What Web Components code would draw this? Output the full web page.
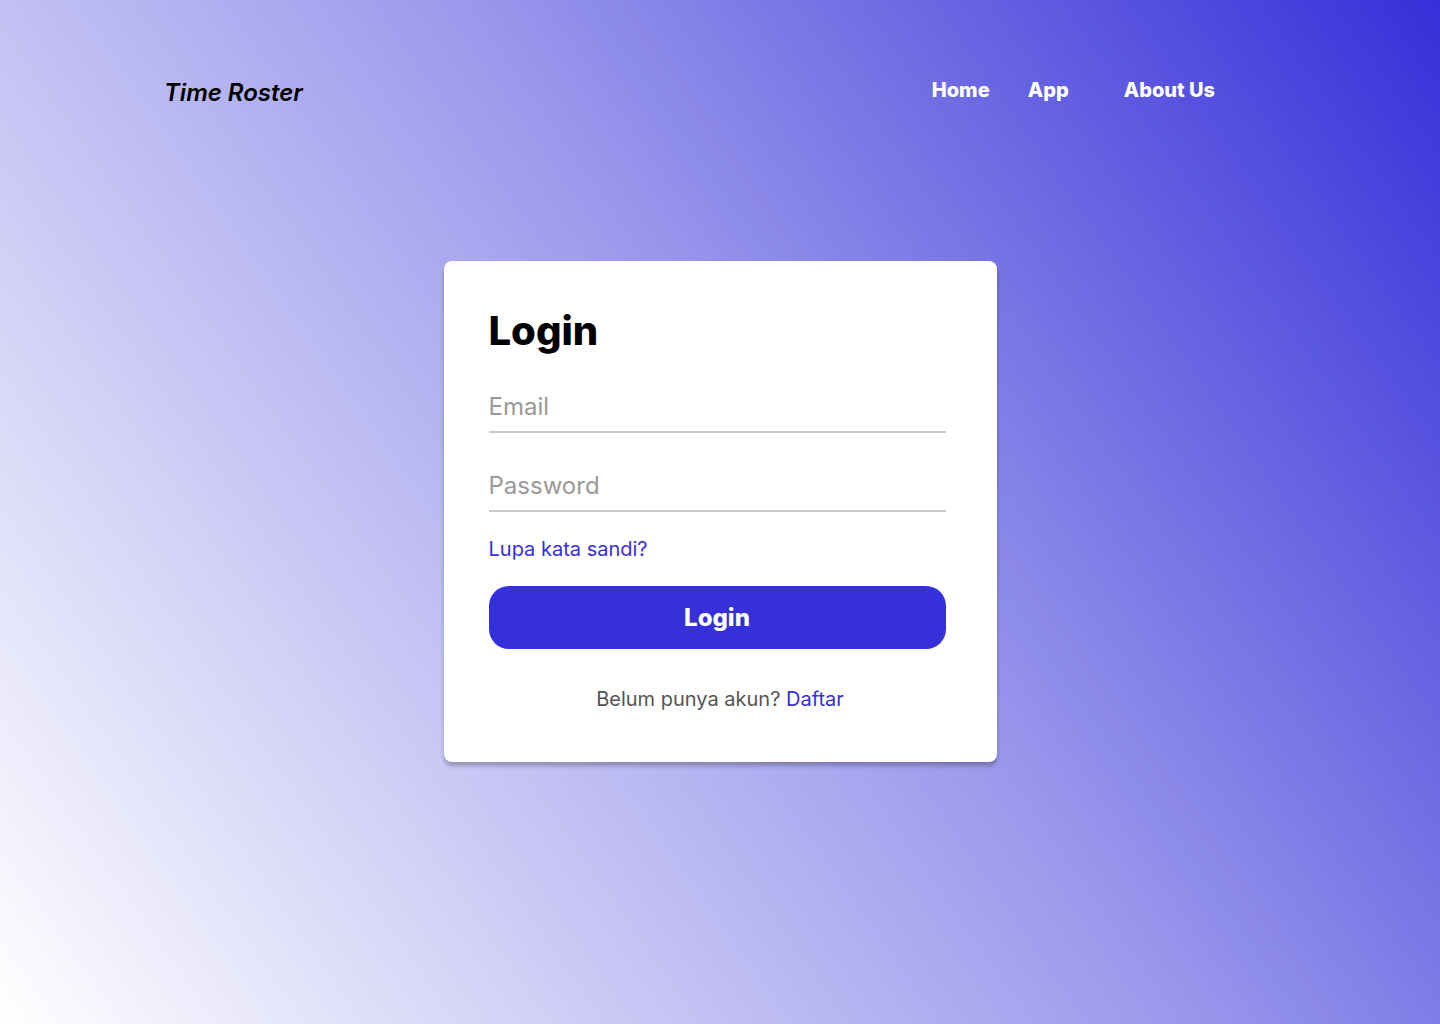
<!DOCTYPE html>
<html lang="id">
<head>
<meta charset="utf-8">
<title>Time Roster</title>
<style>
html{height:100%}
body{margin:0;min-height:100%;font-family:Inter,"Liberation Sans",sans-serif;color:#000;background:linear-gradient(55deg,#fff 0%,#9a98ec 55%,#3530d9 100%) no-repeat;display:grid}
</style>
</head>
<body>
<roster-page>
  <roster-header slot="header"></roster-header>
  <login-card></login-card>
</roster-page>
<script>
const define = (name, html) => {
  const template = document.createElement('template');
  template.innerHTML = html;
  customElements.define(name, class extends HTMLElement {
    constructor() {
      super();
      this.attachShadow({ mode: 'open' }).append(template.content.cloneNode(true));
    }
  });
};

define('roster-page', `
<style>
:host{display:flex;flex-direction:column;min-height:100vh;box-sizing:border-box}
main{display:flex;justify-content:center;padding:153px 24px 64px}
</style>
<slot name="header"></slot>
<main><slot></slot></main>`);

define('nav-link', `
<style>
:host{display:block}
a{color:#fff;text-decoration:none;font-size:20px;line-height:24px;font-weight:800}
</style>
<a href="#"><slot></slot></a>`);

define('roster-header', `
<style>
:host{display:block}
header{display:flex;justify-content:space-between;align-items:flex-start;padding:78px 225px 0 164px}
.brand{font-size:24px;line-height:30px;font-style:italic;font-weight:600}
nav{display:flex}
nav-link{min-width:96px}
nav-link:last-child{min-width:0}
</style>
<header>
  <div class="brand">Time Roster</div>
  <nav><nav-link>Home</nav-link><nav-link>App</nav-link><nav-link>About Us</nav-link></nav>
</header>`);

customElements.define('text-field', class extends HTMLElement {
  connectedCallback() {
    if (this.shadowRoot) return;
    const label = this.getAttribute('label');
    const type = this.getAttribute('type');
    this.attachShadow({ mode: 'open' }).innerHTML = `
<style>
:host{display:block}
input{display:block;width:100%;box-sizing:border-box;height:52px;margin:0;padding:0;border:0;border-bottom:2px solid #c8c8c8;border-radius:0;background:none;font-family:inherit;font-size:24px;outline:0;color:#000}
input::placeholder{color:#999;opacity:1}
</style>
<input id="field" type="${type}" placeholder="${label}" aria-label="${label}">`;
  }
});

define('login-card', `
<style>
:host{display:block;box-sizing:border-box;width:100%;max-width:553px;background:#fff;border-radius:8px;padding:45px 51px 51px 45px;box-shadow:0 4px 4px rgba(0,0,0,.25)}
h1{margin:0 0 25px;font-size:40px;line-height:50px;font-weight:800}
form{display:flex;flex-direction:column}
text-field + text-field{margin-top:27px}
a{color:#3530d9;text-decoration:none}
.forgot{align-self:flex-start;font-size:20px;line-height:24px;margin:25px 0}
button{height:63px;border:0;border-radius:20px;background:#3530d9;color:#fff;font-family:inherit;font-size:24px;font-weight:800;padding:0}
p{margin:38px 0 0;padding-left:6px;text-align:center;font-size:20px;line-height:24px;color:#555}
</style>
<h1>Login</h1>
<form>
  <text-field label="Email" type="email"></text-field>
  <text-field label="Password" type="password"></text-field>
  <a class="forgot" href="#">Lupa kata sandi?</a>
  <button type="button">Login</button>
</form>
<p>Belum punya akun? <a href="#">Daftar</a></p>`);
</script>
</body>
</html>
